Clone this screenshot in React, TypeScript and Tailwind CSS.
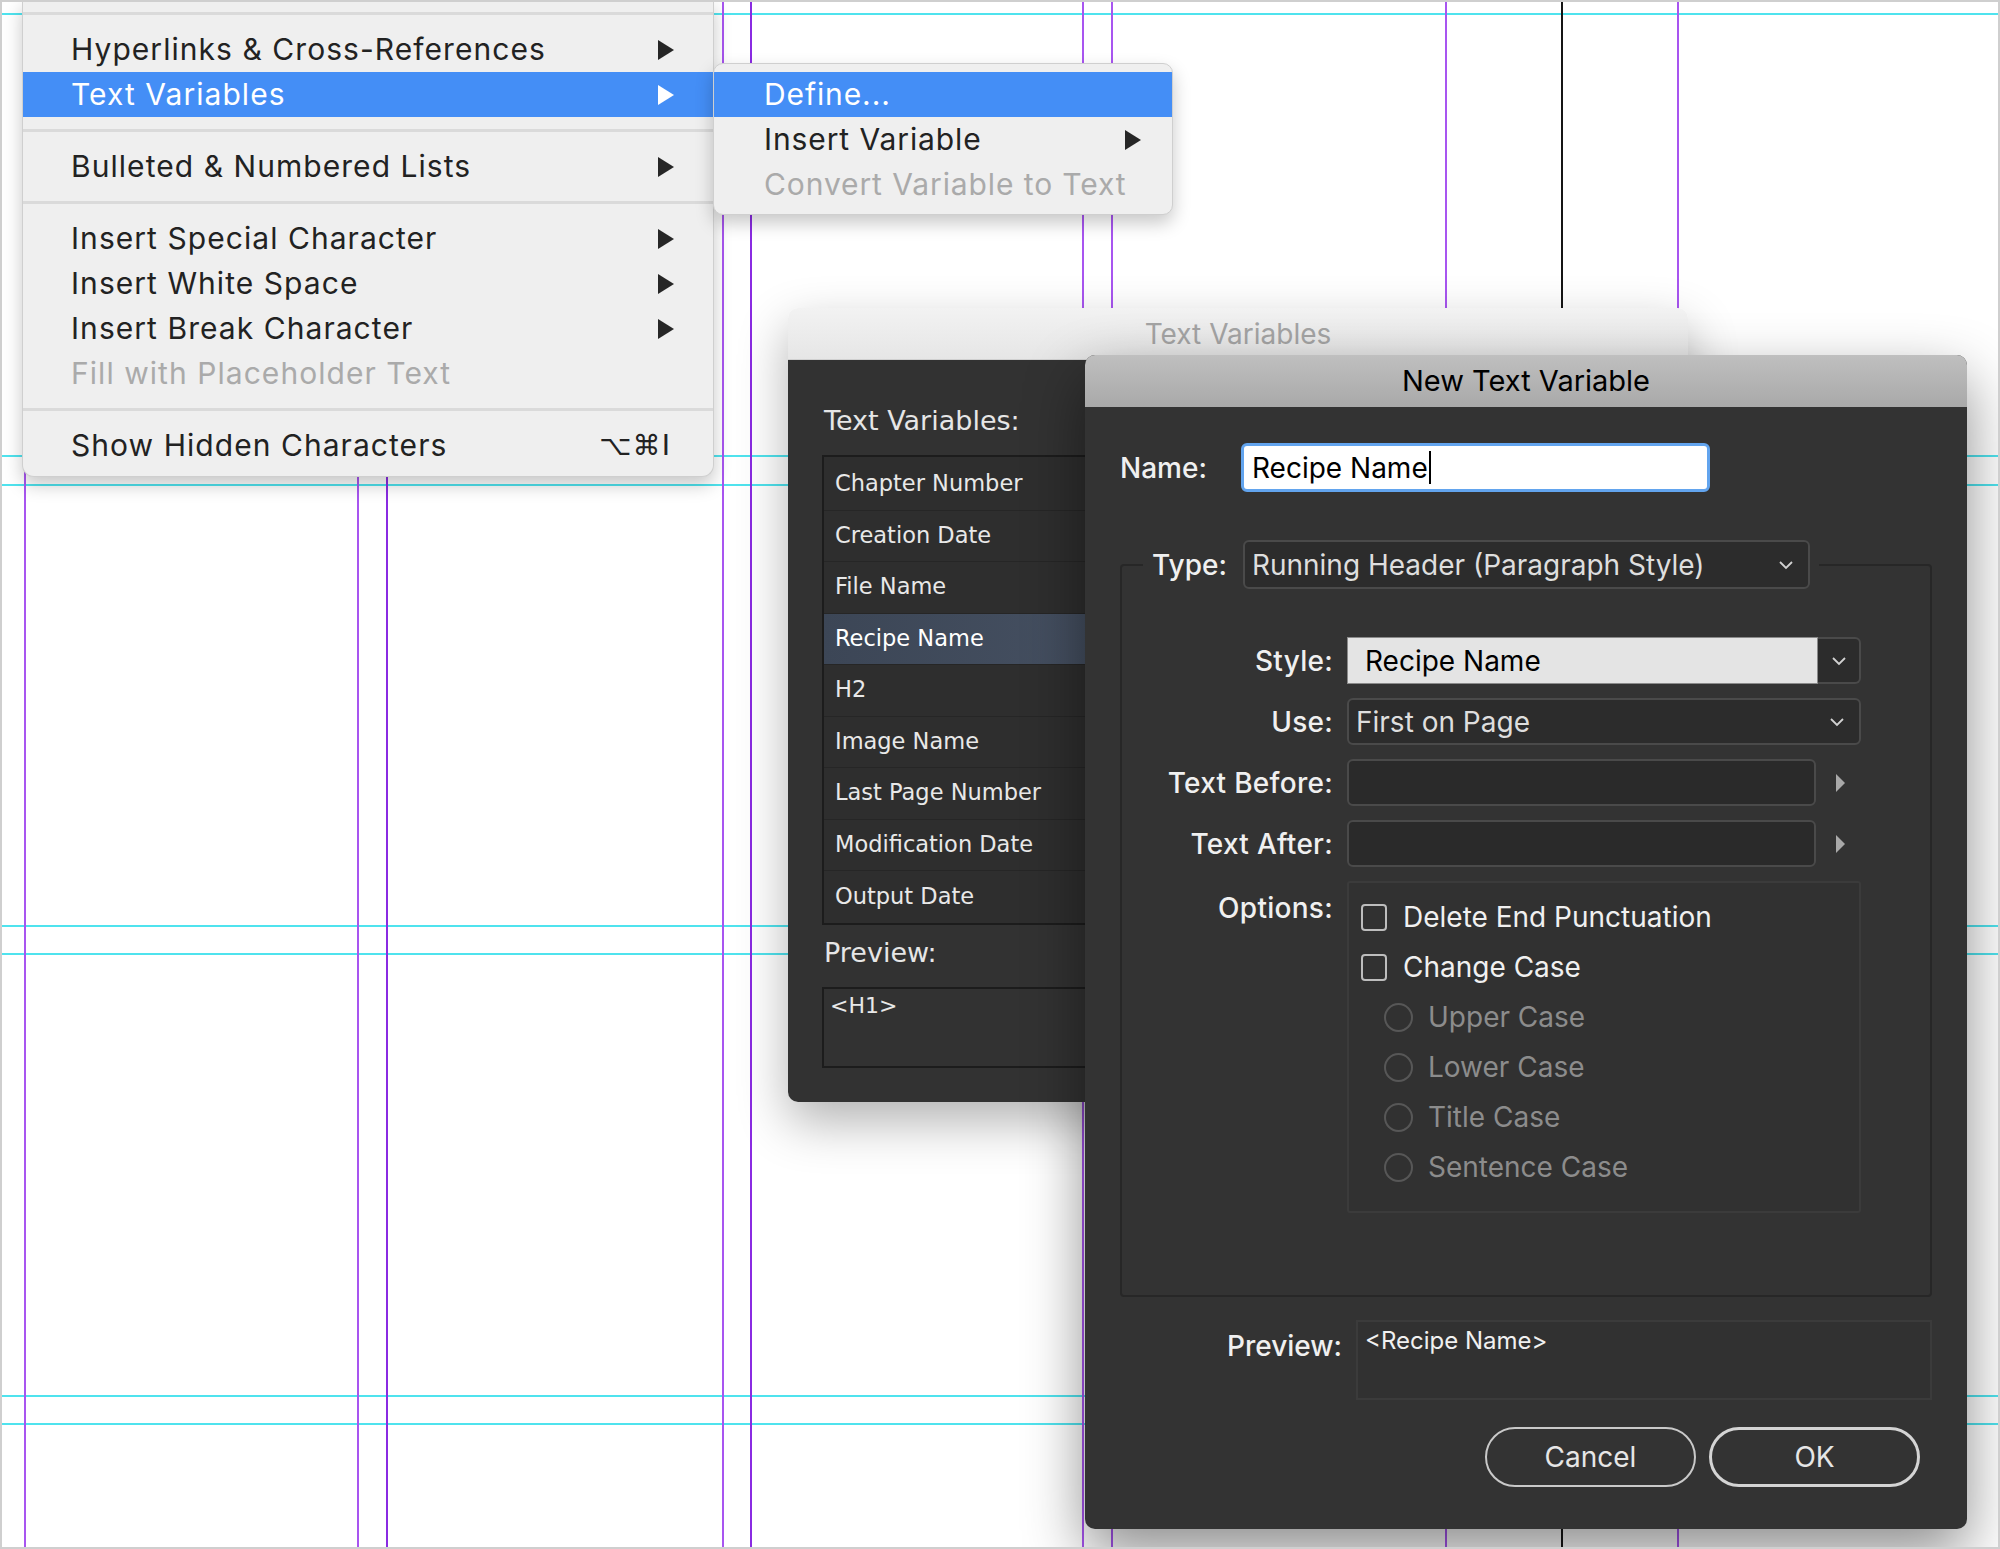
import React from 'react';

const hGuides = [13, 455, 484, 925, 953, 1395, 1423];
const vGuides = [
  { x: 24, strong: false },
  { x: 357, strong: false },
  { x: 386, strong: true },
  { x: 722, strong: false },
  { x: 750, strong: true },
  { x: 1082, strong: false },
  { x: 1111, strong: false },
  { x: 1445, strong: false },
  { x: 1677, strong: false },
];

const MenuArrow = ({ white }: { white?: boolean }) => (
  <svg width="18" height="22" viewBox="0 0 18 22">
    <path d="M1 1 L17 11 L1 21 Z" fill={white ? '#ffffff' : '#262626'} />
  </svg>
);

const Chevron = () => (
  <svg width="16" height="10" viewBox="0 0 16 10">
    <path d="M2 2 L8 8 L14 2" stroke="#d2d2d2" strokeWidth="1.8" fill="none" />
  </svg>
);

const SmallArrow = () => (
  <svg width="11" height="20" viewBox="0 0 11 20">
    <path d="M1 1 L10 10 L1 19 Z" fill="#a9a9a9" />
  </svg>
);

interface ItemProps {
  label: string;
  arrow?: boolean;
  active?: boolean;
  disabled?: boolean;
  shortcut?: string;
}

const MenuItem = ({ label, arrow, active, disabled, shortcut }: ItemProps) => (
  <div
    className={`flex h-[45px] items-center justify-between pl-[48px] pr-[38px] ${
      active ? 'bg-[#448ef6] text-white' : disabled ? 'text-[#aaaaaa]' : 'text-[#222222]'
    }`}
  >
    <span>{label}</span>
    {arrow && <MenuArrow white={active} />}
    {shortcut && <span className="mr-[4px] font-[family-name:'DejaVu_Sans',sans-serif] text-[28px]">{shortcut}</span>}
  </div>
);

const Sep = () => (
  <div className="flex h-[27px] items-center">
    <div className="h-[3px] w-full bg-[#dadada]" />
  </div>
);

const SubItem = ({ label, arrow, active, disabled }: ItemProps) => (
  <div
    className={`flex h-[45px] items-center justify-between pl-[50px] pr-[30px] ${
      active ? 'bg-[#448ef6] text-white' : disabled ? 'text-[#aaaaaa]' : 'text-[#222222]'
    }`}
  >
    <span>{label}</span>
    {arrow && <MenuArrow />}
  </div>
);

const variables = [
  'Chapter Number',
  'Creation Date',
  'File Name',
  'Recipe Name',
  'H2',
  'Image Name',
  'Last Page Number',
  'Modification Date',
  'Output Date',
];

const Checkbox = ({ label }: { label: string }) => (
  <div className="flex h-[50px] items-center pl-[12px]">
    <div className="h-[27px] w-[26px] rounded-[4px] border-2 border-[#bdbdbd]" />
    <span className="ml-[16px] text-[#f0f0f0]">{label}</span>
  </div>
);

const Radio = ({ label }: { label: string }) => (
  <div className="flex h-[50px] items-center pl-[35px]">
    <div className="h-[29px] w-[29px] rounded-full border-2 border-[#575757]" />
    <span className="ml-[15px] text-[#8c8c8c]">{label}</span>
  </div>
);

export default function App() {
  return (
    <div className="relative h-[1549px] w-[2000px] overflow-hidden bg-white font-[family-name:Inter,'DejaVu_Sans',sans-serif]">
      {/* canvas guides */}
      {hGuides.map((y) => (
        <div key={`h${y}`} className="absolute left-0 h-[2px] w-full bg-[#4fe3ee]" style={{ top: y }} />
      ))}
      {vGuides.map((g) => (
        <div
          key={`v${g.x}`}
          className={`absolute top-0 h-full ${g.strong ? 'w-[2px] bg-[#8a2be2]' : 'w-[1.5px] bg-[#a855f0]'}`}
          style={{ left: g.x }}
        />
      ))}
      <div className="absolute left-[1561px] top-0 h-full w-[1.5px] bg-[#151515]" />

      {/* context menu */}
      <div className="absolute left-[22px] top-0 h-[477px] w-[692px] rounded-b-[12px] border border-t-0 border-[#cfcfcf] bg-[#efefef] text-[30px] tracking-[0.035em] shadow-[0_8px_18px_rgba(0,0,0,0.22)]">
        <Sep />
        <MenuItem label="Hyperlinks & Cross-References" arrow />
        <MenuItem label="Text Variables" arrow active />
        <Sep />
        <MenuItem label="Bulleted & Numbered Lists" arrow />
        <Sep />
        <MenuItem label="Insert Special Character" arrow />
        <MenuItem label="Insert White Space" arrow />
        <MenuItem label="Insert Break Character" arrow />
        <MenuItem label="Fill with Placeholder Text" disabled />
        <Sep />
        <MenuItem label="Show Hidden Characters" shortcut="⌥⌘I" />
      </div>

      {/* submenu */}
      <div className="absolute left-[713px] top-[63px] h-[152px] w-[460px] overflow-hidden rounded-[10px] border border-[#cfcfcf] bg-[#efefef] py-[8px] text-[30px] tracking-[0.03em] shadow-[0_8px_18px_rgba(0,0,0,0.22)]">
        <SubItem label="Define..." active />
        <SubItem label="Insert Variable" arrow />
        <SubItem label="Convert Variable to Text" disabled />
      </div>

      {/* Text Variables dialog (behind) */}
      <div className="absolute left-[788px] top-[308px] flex h-[794px] w-[900px] flex-col overflow-hidden rounded-[10px] shadow-[0_20px_50px_rgba(0,0,0,0.3)]">
        <div className="flex h-[52px] items-center justify-center border-b border-[#d0d0d0] bg-linear-to-b from-[#f2f2f2] to-[#e6e6e6] text-[28px] text-[#a4a4a4]">
          Text Variables
        </div>
        <div className="flex-1 bg-[#323232] pl-[34px] pt-[45px] font-[family-name:'DejaVu_Sans',sans-serif]">
          <div className="ml-[2px] text-[27px] leading-[32px] text-[#e6e6e6]">Text Variables:</div>
          <div className="mt-[18px] w-[420px] border-2 border-[#1c1c1c] bg-[#2e2e2e] pt-[2px]">
            {variables.map((v) => (
              <div
                key={v}
                className={`flex h-[51.5px] items-center border-b border-[#262626] pl-[11px] text-[22.5px] last:border-b-0 ${
                  v === 'Recipe Name' ? 'bg-linear-to-r from-[#3c4656] to-[#4a5567] text-white' : 'text-[#e8e8e8]'
                }`}
              >
                {v}
              </div>
            ))}
          </div>
          <div className="ml-[2px] mt-[12px] text-[27px] leading-[32px] text-[#e6e6e6]">Preview:</div>
          <div className="mt-[18px] h-[81px] w-[420px] border-2 border-[#1c1c1c] pl-[6px] pt-[3px] text-[22px] leading-[28px] text-[#e8e8e8]">
            &lt;H1&gt;
          </div>
        </div>
      </div>

      {/* New Text Variable dialog */}
      <div className="absolute left-[1085px] top-[355px] flex h-[1174px] w-[882px] flex-col overflow-hidden rounded-[10px] bg-[#333333] shadow-[0_24px_60px_rgba(0,0,0,0.45)]">
        <div className="flex h-[52px] items-center justify-center bg-linear-to-b from-[#bfbfbf] to-[#a9a9a9] text-[29px] text-black">
          New Text Variable
        </div>
        <div className="flex-1 px-[35px] pt-[36px] text-[28px] text-[#f0f0f0]">
          <div className="flex h-[49px] items-center">
            <span className="w-[121px] font-medium">Name:</span>
            <div className="flex h-[49px] w-[469px] items-center rounded-[6px] border-[3px] border-[#62a4ee] bg-white pl-[8px] text-black">
              Recipe Name
              <span className="ml-[1px] h-[33px] w-[2px] bg-black" />
            </div>
          </div>

          <fieldset className="mt-[48px] rounded-[4px] border-2 border-[#272727] pb-[82px]">
            <legend className="ml-[21px] px-[9px]">
              <div className="flex items-center gap-[16px]">
                <span className="font-medium">Type:</span>
                <div className="flex h-[49px] w-[567px] items-center justify-between rounded-[6px] border-2 border-[#4a4a4a] bg-[#2c2c2c] pl-[7px] pr-[14px] text-[#dedede]">
                  Running Header (Paragraph Style)
                  <Chevron />
                </div>
              </div>
            </legend>

            <div className="grid grid-cols-[211px_514px] gap-x-[14px] gap-y-[14px] pt-[48px]">
              <div className="flex h-[47px] items-center justify-end font-medium tracking-[0.01em]">Style:</div>
              <div className="flex h-[47px]">
                <div className="flex w-[471px] items-center border border-[#8a8a8a] bg-[#e4e4e4] pl-[17px] text-black">
                  Recipe Name
                </div>
                <div className="flex flex-1 items-center justify-center rounded-r-[6px] border-2 border-l-0 border-[#4a4a4a] bg-[#2c2c2c]">
                  <Chevron />
                </div>
              </div>

              <div className="flex h-[47px] items-center justify-end font-medium tracking-[0.01em]">Use:</div>
              <div className="flex h-[47px] items-center justify-between rounded-[6px] border-2 border-[#4a4a4a] bg-[#2c2c2c] pl-[7px] pr-[14px] text-[#dedede]">
                First on Page
                <Chevron />
              </div>

              <div className="flex h-[47px] items-center justify-end font-medium tracking-[0.01em]">Text Before:</div>
              <div className="flex h-[47px] items-center">
                <div className="h-[47px] w-[469px] rounded-[6px] border-2 border-[#4a4a4a] bg-[#2a2a2a]" />
                <div className="ml-[19px]">
                  <SmallArrow />
                </div>
              </div>

              <div className="flex h-[47px] items-center justify-end font-medium tracking-[0.01em]">Text After:</div>
              <div className="flex h-[47px] items-center">
                <div className="h-[47px] w-[469px] rounded-[6px] border-2 border-[#4a4a4a] bg-[#2a2a2a]" />
                <div className="ml-[19px]">
                  <SmallArrow />
                </div>
              </div>

              <div className="pt-[10px] text-right font-medium leading-[34px] tracking-[0.01em]">Options:</div>
              <div className="h-[332px] rounded-[3px] border-2 border-[#3b3b3b] bg-[#313131] pt-[9px]">
                <Checkbox label="Delete End Punctuation" />
                <Checkbox label="Change Case" />
                <Radio label="Upper Case" />
                <Radio label="Lower Case" />
                <Radio label="Title Case" />
                <Radio label="Sentence Case" />
              </div>
            </div>
          </fieldset>

          <div className="mt-[23px] flex">
            <div className="w-[222px] pt-[9px] text-right font-medium leading-[34px]">Preview:</div>
            <div className="ml-[14px] h-[80px] w-[576px] border-2 border-[#3b3b3b] bg-[#313131] pl-[7px] pt-[5px] text-[24px] leading-[28px] text-[#f0f0f0]">
              &lt;Recipe Name&gt;
            </div>
          </div>

          <div className="mt-[27px] flex justify-end gap-[13px] pr-[12px]">
            <div className="flex h-[60px] w-[211px] items-center justify-center rounded-full border-2 border-[#c9c9c9] text-[#e6e6e6]">
              Cancel
            </div>
            <div className="flex h-[60px] w-[211px] items-center justify-center rounded-full border-[3px] border-[#d4d4d4] text-[#e6e6e6]">
              OK
            </div>
          </div>
        </div>
      </div>

      {/* image frame */}
      <div className="pointer-events-none absolute inset-0 border-2 border-[#cfcfcf]" />
    </div>
  );
}
